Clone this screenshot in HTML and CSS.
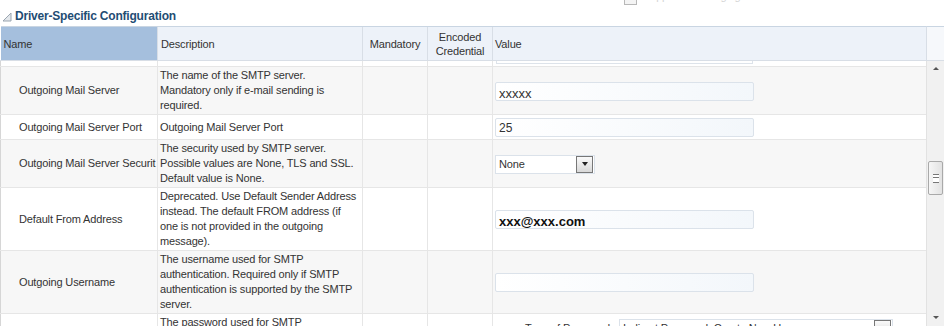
FILE: index.html
```html
<!DOCTYPE html>
<html lang="en">
<head>
    <meta charset="UTF-8">
    <title>Driver-Specific Configuration</title>
    <link rel="stylesheet" href="styles.css">
</head>
<body>
    <div class="top-strip">
        <span class="top-check"></span>
        <span class="top-label">Supports Messaging</span>
    </div>
    <div class="section-title">
        <svg class="disclosure" width="10" height="10" viewBox="0 0 10 10">
            <polygon points="9,1 9,9 1,9" fill="#e4e8ec" stroke="#9aa5b0" stroke-width="1"/>
        </svg>
        <span>Driver-Specific Configuration</span>
    </div>

    <div class="grid-wrap">
        <div class="grid-main">
            <table class="config-table">
                <colgroup>
                    <col class="c-name">
                    <col class="c-desc">
                    <col class="c-mand">
                    <col class="c-enc">
                    <col class="c-value">
                </colgroup>
                <thead>
                    <tr>
                        <th class="h-name selected">Name</th>
                        <th class="h-desc">Description</th>
                        <th class="h-center">Mandatory</th>
                        <th class="h-center">Encoded<br>Credential</th>
                        <th class="h-value">Value</th>
                    </tr>
                </thead>
                <tbody>
                    <tr class="row-cut">
                        <td></td><td></td><td></td><td></td>
                        <td><div class="input-tail"></div></td>
                    </tr>
                    <tr class="odd">
                        <td class="name">Outgoing Mail Server</td>
                        <td class="desc">The name of the SMTP server.<br>Mandatory only if e-mail sending is<br>required.</td>
                        <td></td><td></td>
                        <td class="value"><div class="field big">xxxxx</div></td>
                    </tr>
                    <tr>
                        <td class="name">Outgoing Mail Server Port</td>
                        <td class="desc single">Outgoing Mail Server Port</td>
                        <td></td><td></td>
                        <td class="value"><div class="field">25</div></td>
                    </tr>
                    <tr class="odd">
                        <td class="name">Outgoing Mail Server Securit</td>
                        <td class="desc">The security used by SMTP server.<br>Possible values are None, TLS and SSL.<br>Default value is None.</td>
                        <td></td><td></td>
                        <td class="value">
                            <div class="select">
                                <span class="select-text">None</span>
                                <span class="select-btn"><span class="arrow"></span></span>
                            </div>
                        </td>
                    </tr>
                    <tr>
                        <td class="name">Default From Address</td>
                        <td class="desc">Deprecated. Use Default Sender Address<br>instead. The default FROM address (if<br>one is not provided in the outgoing<br>message).</td>
                        <td></td><td></td>
                        <td class="value"><div class="field big dark">xxx@xxx.com</div></td>
                    </tr>
                    <tr class="odd">
                        <td class="name">Outgoing Username</td>
                        <td class="desc">The username used for SMTP<br>authentication. Required only if SMTP<br>authentication is supported by the SMTP<br>server.</td>
                        <td></td><td></td>
                        <td class="value"><div class="field"></div></td>
                    </tr>
                    <tr>
                        <td class="name"></td>
                        <td class="desc">The password used for SMTP<br>authentication.</td>
                        <td></td><td></td>
                        <td class="value top">
                            <div class="pw-row">
                                <span class="pw-label">Type of Password</span>
                                <div class="select wide">
                                    <span class="select-text">Indirect Password, Create New User</span>
                                    <span class="select-btn"><span class="arrow"></span></span>
                                </div>
                            </div>
                        </td>
                    </tr>
                </tbody>
            </table>
        </div>
        <div class="grid-side">
            <div class="side-head"></div>
            <div class="scrollbar">
                <span class="sb-up"></span>
                <span class="sb-thumb"><span class="grip"></span></span>
                <span class="sb-down"></span>
            </div>
        </div>
    </div>
</body>
</html>
```

FILE: styles.css
```css
body {
    font-family: "Liberation Sans", Arial, sans-serif;
    font-size: 11px;
    letter-spacing: -0.15px;
    color: #333;
    margin: 0;
    padding: 0;
    background: #fff;
    overflow: hidden;
}
.top-strip {
    height: 6px;
    overflow: hidden;
    display: flex;
    align-items: flex-end;
    gap: 6px;
    padding-left: 624px;
}
.top-check {
    flex: none;
    width: 11px;
    height: 11px;
    margin-bottom: 1px;
    border: 1px solid #b8b8b8;
    background: #f4f4f4;
}
.top-label {
    flex: none;
    color: #d4d4d4;
    font-size: 11px;
    line-height: 11px;
    margin-bottom: 4px;
}
.section-title {
    height: 20px;
    display: flex;
    align-items: center;
    gap: 3px;
    padding-left: 2px;
    font-weight: bold;
    font-size: 12px;
    letter-spacing: -0.2px;
    color: #1f4d74;
}
.disclosure {
    flex: none;
    margin-top: 2px;
}
.grid-wrap {
    display: flex;
    height: 300px;
    overflow: hidden;
}
.grid-main {
    width: 926px;
    flex: none;
    overflow: hidden;
}
.grid-side {
    width: 18px;
    flex: none;
    display: flex;
    flex-direction: column;
}
.side-head {
    height: 33px;
    border-top: 1px solid #c9d5e2;
    border-bottom: 1px solid #d8dee6;
    border-left: 1px solid #d8dee6;
    background: #f6f8fb;
}
.scrollbar {
    flex: 1;
    display: flex;
    flex-direction: column;
    align-items: center;
    background: #f1f1f1;
    border-left: 1px solid #e2e2e2;
    padding-top: 6px;
}
.sb-up, .sb-down {
    width: 0;
    height: 0;
    border-left: 3px solid transparent;
    border-right: 3px solid transparent;
}
.sb-up {
    border-bottom: 3px solid #555;
}
.sb-down {
    border-top: 3px solid #555;
    margin-top: 121px;
}
.sb-thumb {
    margin-top: 91px;
    width: 13px;
    height: 32px;
    border: 1px solid #a9a9a9;
    border-radius: 2px;
    background: linear-gradient(to right, #f6f6f6, #e2e2e2);
    display: flex;
    align-items: center;
    justify-content: center;
}
.grip {
    width: 6px;
    height: 7px;
    border-top: 1px solid #777;
    border-bottom: 1px solid #777;
    background: linear-gradient(#fff 0, #fff 2px, #777 2px, #777 3px, #fff 3px);
}
.config-table {
    width: 926px;
    table-layout: fixed;
    border-collapse: collapse;
}
.c-name { width: 157px; }
.c-desc { width: 205px; }
.c-mand { width: 65px; }
.c-enc { width: 65px; }
.c-value { width: 434px; }
.config-table th {
    height: 33px;
    padding: 0 3px;
    font-weight: normal;
    text-align: left;
    color: #333;
    background: #edf2f9;
    border-top: 1px solid #c9d5e2;
    border-bottom: 1px solid #d8dee6;
    border-left: 1px solid #d8dee6;
    line-height: 14px;
}
.config-table th.selected {
    background: #a5bfdd;
    border-left: none;
}
.config-table th.h-center {
    text-align: center;
    padding: 0 2px;
}
.config-table th.h-value {
    padding-left: 2px;
}
.config-table td {
    border-left: 1px solid #e6e6e6;
    border-bottom: 1px solid #e6e6e6;
    padding: 0;
    vertical-align: middle;
    line-height: 15px;
}
.config-table td:first-child {
    border-left: 1px solid #d6d6d6;
}
.config-table tr.odd td {
    background: #f7f7f7;
}
.row-cut td {
    height: 5px;
}
.input-tail {
    margin: 0 174px 2px 3px;
    height: 2px;
    border: 1px solid #dde3ea;
    border-top: none;
}
.name {
    padding-left: 18px !important;
    white-space: nowrap;
    overflow: hidden;
}
.desc {
    vertical-align: top !important;
    padding: 1px 0 1px 2px !important;
    white-space: nowrap;
    overflow: hidden;
}
.desc.single {
    vertical-align: middle !important;
}
.value {
    padding: 3px 2px 2px !important;
}
.value.top {
    vertical-align: top !important;
}
.field {
    width: 254px;
    height: 17px;
    border: 1px solid #dbe2ea;
    border-radius: 2px;
    background: linear-gradient(to right, #fff, #f3f7fb);
    padding-left: 3px;
    line-height: 18px;
    font-size: 12px;
    letter-spacing: 0;
    color: #333;
}
.field.big {
    font-size: 13px;
    line-height: 21px;
}
.field.dark {
    color: #111;
    font-weight: bold;
    font-size: 13px;
}
.select {
    width: 98px;
    height: 17px;
    border: 1px solid #dbe2ea;
    background: #fff;
    display: flex;
    align-items: center;
    justify-content: space-between;
}
.select-text {
    padding-left: 3px;
    white-space: nowrap;
    overflow: hidden;
}
.select-btn {
    flex: none;
    width: 15px;
    height: 15px;
    margin-right: 1px;
    border: 1px solid #777;
    background: linear-gradient(#fafafa, #d8d8d8);
    display: flex;
    align-items: center;
    justify-content: center;
}
.arrow {
    width: 0;
    height: 0;
    border-left: 3px solid transparent;
    border-right: 3px solid transparent;
    border-top: 4px solid #222;
}
.pw-row {
    display: flex;
    align-items: center;
    gap: 4px;
    padding-left: 30px;
    margin-top: 2px;
}
.pw-label {
    white-space: nowrap;
    width: 90px;
}
.select.wide {
    width: 272px;
}
```
